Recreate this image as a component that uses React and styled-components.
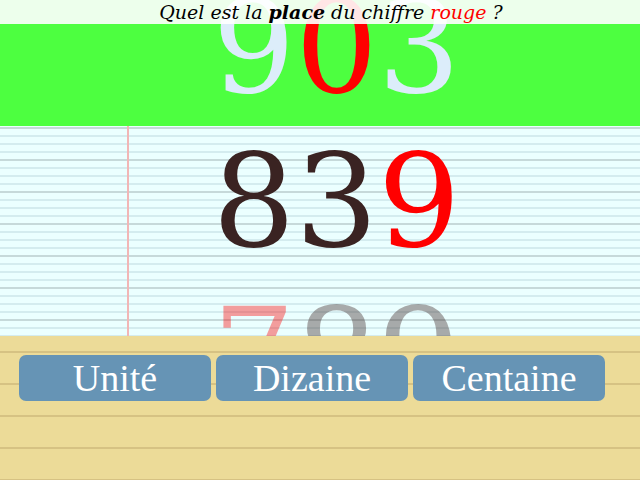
import React from "react";
import styled, { createGlobalStyle } from "styled-components";

const GlobalStyle = createGlobalStyle`
    html, body {
        margin: 0;
        padding: 0;
        overflow: hidden;
    }
`;

const Page = styled.div`
    width: 640px;
    height: 480px;
    display: flex;
    flex-direction: column;
    overflow: hidden;
`;

const Board = styled.div`
    position: relative;
    height: 336px;
    overflow: hidden;
    background-color: #ebffff;
    background-image:
        repeating-linear-gradient(to bottom, #c6d9da 0 1px, transparent 1px 31px, #c6d9da 31px 32px),
        repeating-linear-gradient(to bottom, #d4ecef 0 1px, transparent 1px 7px, #d4ecef 7px 8px);

    &::before {
        content: "";
        position: absolute;
        top: 0;
        bottom: 0;
        left: 127px;
        width: 2px;
        background: #f2b6b6;
    }
`;

const Header = styled.div`
    position: absolute;
    top: 0;
    left: 0;
    right: 0;
    z-index: 2;
    height: 24px;
    line-height: 24px;
    padding-left: 22px;
    text-align: center;
    background: rgba(255, 255, 255, 0.9);
    font-family: "DejaVu Serif", serif;
    font-style: italic;
    font-size: 19px;
    color: #000;
`;

const Strong = styled.b`
    font-weight: bold;
`;

const Red = styled.span`
    color: #ff0000;
`;

const List = styled.div`
    margin-top: -24px;
`;

const Row = styled.div`
    position: relative;
    height: 150px;
    margin-bottom: 4px;
    line-height: 142px;
    padding-left: 33px;
    text-align: center;
    font-family: "DejaVu Serif", serif;
    font-size: 130px;
    white-space: nowrap;
    background: ${(props) => (props.done ? "#4dff40" : "transparent")};
    opacity: ${(props) => (props.next ? 0.38 : 1)};
`;

const Digit = styled.span`
    color: ${(props) => props.color};
`;

const Bottom = styled.div`
    height: 144px;
    background-color: #ecdb98;
    background-image: repeating-linear-gradient(
        to bottom,
        transparent 0 15px,
        #d6c283 15px 17px,
        transparent 17px 32px
    );
    padding: 19px;
    box-sizing: border-box;
`;

const Choices = styled.div`
    display: flex;
    gap: 5px;
`;

const Choice = styled.button`
    width: 192px;
    height: 46px;
    border: none;
    border-radius: 7px;
    background: #6694b5;
    color: #fff;
    font-family: "Liberation Serif", serif;
    font-size: 38px;
    padding: 0;
    cursor: pointer;
`;

const rows = [
    { digits: ["9", "0", "3"], red: 1, done: true },
    { digits: ["8", "3", "9"], red: 2 },
    { digits: ["7", "8", "9"], red: 0, next: true },
];

const App = () => {
    return (
        <Page>
            <GlobalStyle />
            <Board>
                <Header>
                    Quel est la <Strong>place</Strong> du chiffre <Red>rouge</Red> ?
                </Header>
                <List>
                    {rows.map((row, i) => (
                        <Row key={i} done={row.done} next={row.next}>
                            {row.digits.map((d, j) => (
                                <Digit
                                    key={j}
                                    color={j === row.red ? "#ff0000" : row.done ? "#dcedfa" : "#3a2322"}
                                >
                                    {d}
                                </Digit>
                            ))}
                        </Row>
                    ))}
                </List>
            </Board>
            <Bottom>
                <Choices>
                    <Choice>Unité</Choice>
                    <Choice>Dizaine</Choice>
                    <Choice>Centaine</Choice>
                </Choices>
            </Bottom>
        </Page>
    );
};

export default App;
